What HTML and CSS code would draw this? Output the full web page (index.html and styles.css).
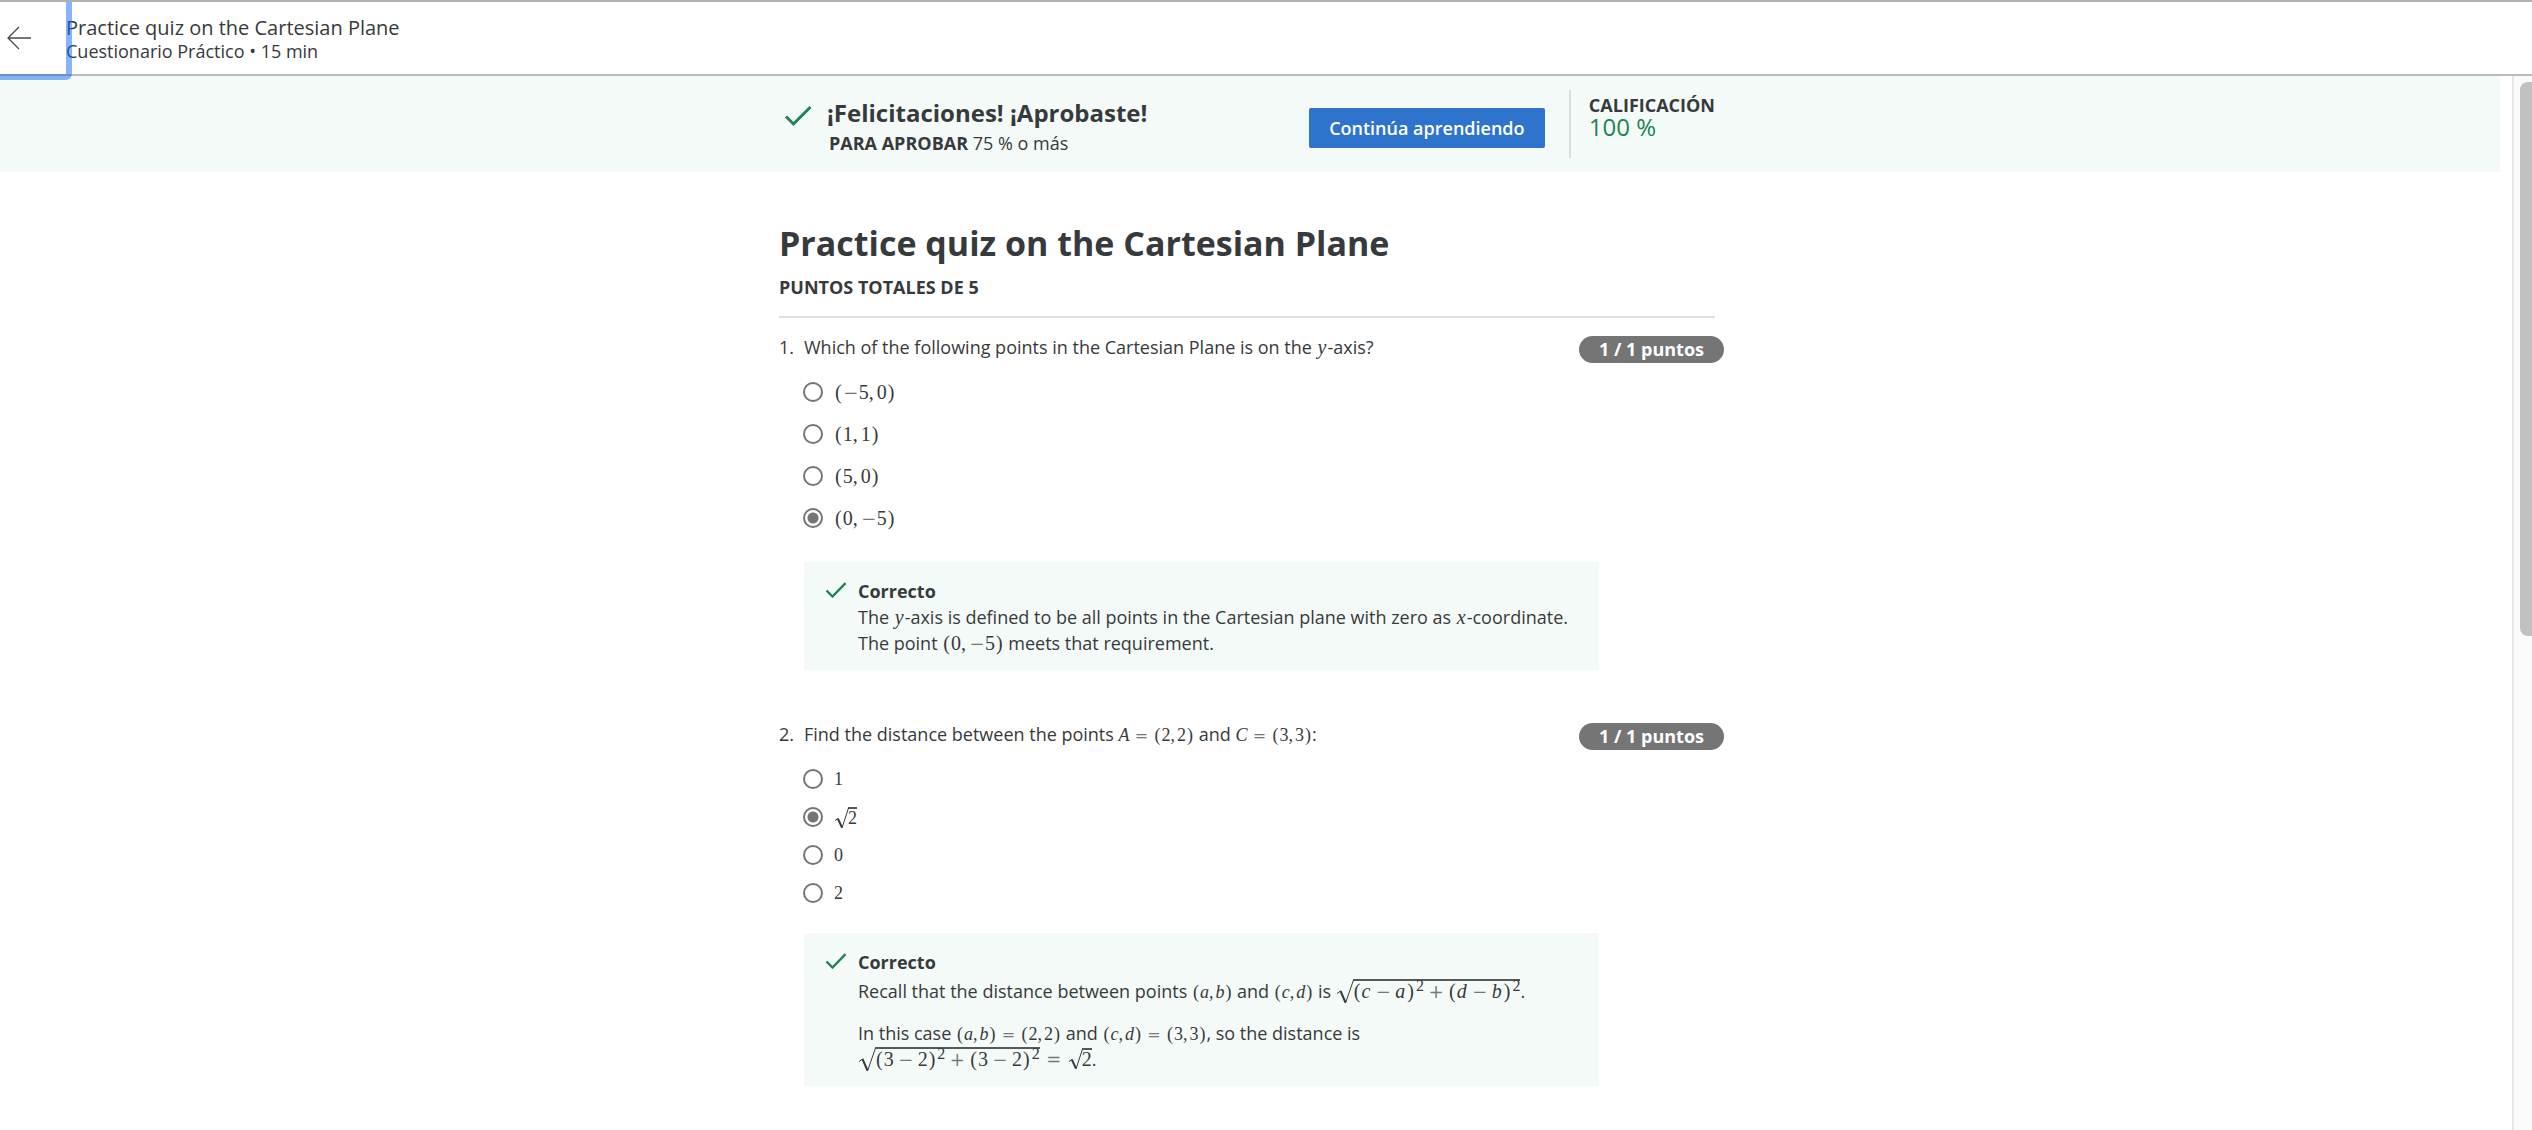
FILE: index.html
```html
<!DOCTYPE html>
<html lang="es">
<head>
<meta charset="utf-8">
<title>Practice quiz on the Cartesian Plane</title>
<link rel="stylesheet" href="styles.css">
</head>
<body>
<header class="topbar">
  <button class="back" type="button" aria-label="Volver">
    <svg width="24" height="24" viewBox="0 0 24 24" fill="none" stroke="#4a4a50" stroke-width="1.3"><path d="M12 1 1 12l11 11M1 12h23"/></svg>
  </button>
  <div class="topbar-text">
    <div class="topbar-title">Practice quiz on the Cartesian Plane</div>
    <div class="topbar-sub">Cuestionario Práctico • 15 min</div>
  </div>
</header>

<div class="shell">
  <div class="page">
    <section class="banner">
      <div class="column banner-row">
        <svg class="banner-check" width="28" height="22" viewBox="0 0 28 22" fill="none" stroke="#1f8354" stroke-width="3"><path d="M2 11.500 9.500 19 26.500 2"/></svg>
        <div class="banner-text">
          <h2 class="banner-title">¡Felicitaciones! ¡Aprobaste!</h2>
          <p class="banner-sub"><strong>PARA APROBAR</strong> 75 % o más</p>
        </div>
        <button class="continue" type="button">Continúa aprendiendo</button>
        <div class="grade">
          <div class="grade-label">CALIFICACIÓN</div>
          <div class="grade-value">100 %</div>
        </div>
      </div>
    </section>

    <main class="column quiz">
      <h1 class="quiz-title">Practice quiz on the Cartesian Plane</h1>
      <p class="quiz-total">PUNTOS TOTALES DE 5</p>

      <section class="question">
        <div class="prompt-row">
          <span class="number">1.</span>
          <p class="prompt" id="q1">Which of the following points in the Cartesian Plane is on the <span class="math"><i>y</i></span>-axis?</p>
          <span class="badge">1 / 1 puntos</span>
        </div>
        <div class="options" role="radiogroup" aria-labelledby="q1">
          <label class="option"><input type="radio" name="q1"><span class="math"><b>(</b><b class="op">−</b>5<b class="comma">,</b>0<b>)</b></span></label>
          <label class="option"><input type="radio" name="q1"><span class="math"><b>(</b>1<b class="comma">,</b>1<b>)</b></span></label>
          <label class="option"><input type="radio" name="q1"><span class="math"><b>(</b>5<b class="comma">,</b>0<b>)</b></span></label>
          <label class="option"><input type="radio" name="q1" checked><span class="math"><b>(</b>0<b class="comma">,</b><b class="op">−</b>5<b>)</b></span></label>
        </div>
        <div class="feedback">
          <svg class="feedback-check" width="22" height="16" viewBox="0 0 22 16" fill="none" stroke="#1f8354" stroke-width="2.400"><path d="M1.500 8.500 7.500 14.500 20.500 1.200"/></svg>
          <div>
            <p class="verdict">Correcto</p>
            <p>The <span class="math"><i>y</i></span>-axis is defined to be all points in the Cartesian plane with zero as <span class="math"><i>x</i></span>-coordinate.<br>The point <span class="math"><b>(</b>0<b class="comma">,</b><b class="op">−</b>5<b>)</b></span> meets that requirement.</p>
          </div>
        </div>
      </section>

      <section class="question">
        <div class="prompt-row">
          <span class="number">2.</span>
          <p class="prompt" id="q2">Find the distance between the points <span class="math small"><i>A</i><b class="op rel">=</b><b>(</b>2<b class="comma">,</b>2<b>)</b></span> and <span class="math small"><i>C</i><b class="op rel">=</b><b>(</b>3<b class="comma">,</b>3<b>)</b></span>:</p>
          <span class="badge">1 / 1 puntos</span>
        </div>
        <div class="options compact" role="radiogroup" aria-labelledby="q2">
          <label class="option"><input type="radio" name="q2"><span class="math small">1</span></label>
          <label class="option"><input type="radio" name="q2" checked><span class="math small"><span class="root short"><svg class="surd" viewBox="0 0 15 22" fill="none" stroke="#373a3c"><path d="M1 13.500 4 11.500" stroke-width="1"/><path d="M3.800 11.500 8 20.500" stroke-width="2"/><path d="M8 21 14.500 1" stroke-width="1"/></svg><span class="radicand">2</span></span></span></label>
          <label class="option"><input type="radio" name="q2"><span class="math small">0</span></label>
          <label class="option"><input type="radio" name="q2"><span class="math small">2</span></label>
        </div>
        <div class="feedback">
          <svg class="feedback-check" width="22" height="16" viewBox="0 0 22 16" fill="none" stroke="#1f8354" stroke-width="2.400"><path d="M1.500 8.500 7.500 14.500 20.500 1.200"/></svg>
          <div>
            <p class="verdict">Correcto</p>
            <p class="recall">Recall that the distance between points <span class="math small"><b>(</b><i>a</i><b class="comma">,</b><i>b</i><b>)</b></span> and <span class="math small"><b>(</b><i>c</i><b class="comma">,</b><i>d</i><b>)</b></span> is <span class="math"><span class="root"><svg class="surd" viewBox="0 0 18 25" fill="none" stroke="#373a3c"><path d="M1 14.500 4.500 12" stroke-width="1"/><path d="M4.500 12 9.500 23.500" stroke-width="2"/><path d="M9.500 24 17.500 1" stroke-width="1"/></svg><span class="radicand"><b>(</b><i>c</i><b class="op bin">−</b><i>a</i><b>)</b><sup>2</sup><b class="op bin">+</b><b>(</b><i>d</i><b class="op bin">−</b><i>b</i><b>)</b><sup>2</sup></span></span></span>.</p>
            <p>In this case <span class="math small"><b>(</b><i>a</i><b class="comma">,</b><i>b</i><b>)</b><b class="op rel">=</b><b>(</b>2<b class="comma">,</b>2<b>)</b></span> and <span class="math small"><b>(</b><i>c</i><b class="comma">,</b><i>d</i><b>)</b><b class="op rel">=</b><b>(</b>3<b class="comma">,</b>3<b>)</b></span>, so the distance is<br><span class="math"><span class="root"><svg class="surd" viewBox="0 0 18 25" fill="none" stroke="#373a3c"><path d="M1 14.500 4.500 12" stroke-width="1"/><path d="M4.500 12 9.500 23.500" stroke-width="2"/><path d="M9.500 24 17.500 1" stroke-width="1"/></svg><span class="radicand"><b>(</b>3<b class="op bin">−</b>2<b>)</b><sup>2</sup><b class="op bin">+</b><b>(</b>3<b class="op bin">−</b>2<b>)</b><sup>2</sup></span></span><b class="op rel">=</b><span class="root short"><svg class="surd" viewBox="0 0 15 22" fill="none" stroke="#373a3c"><path d="M1 13.500 4 11.500" stroke-width="1"/><path d="M3.800 11.500 8 20.500" stroke-width="2"/><path d="M8 21 14.500 1" stroke-width="1"/></svg><span class="radicand">2</span></span></span>.</p>
          </div>
        </div>
      </section>
    </main>
  </div>
  <div class="scroll-track"><div class="scroll-thumb"></div></div>
</div>
</body>
</html>
```
FILE: styles.css
```css
* { box-sizing: border-box; }

body {
  margin: 0;
  min-height: 100vh;
  display: flex;
  flex-direction: column;
  background: #fff;
  color: #373a3c;
  font-family: "Open Sans", sans-serif;
  font-size: 18px;
  line-height: 26px;
}

p, h1, h2 { margin: 0; }

/* Top bar */
.topbar {
  display: flex;
  height: 76px;
  border-top: 2px solid #b0b0b0;
  border-bottom: 2px solid #bbb;
}

.back {
  position: relative;
  width: 66px;
  padding: 0 0 0 7px;
  border: 0;
  background: none;
  text-align: left;
}

/* Focus ring, drawn over the neighbouring title and divider */
.back::after {
  content: "";
  position: absolute;
  z-index: 1;
  inset: 0 -6px -6px 0;
  border: solid rgba(17, 106, 239, 0.5);
  border-width: 0 6px 6px 0;
  border-radius: 0 0 6px 0;
}

.back svg { display: block; }

.topbar-text { padding-top: 13px; }
.topbar-title { font-size: 20px; line-height: 26px; }
.topbar-sub { font-size: 18px; line-height: 20px; }

/* Scrolling area */
.shell { flex: 1; display: flex; }
.page { flex: 1; padding-right: 12px; }

.scroll-track {
  width: 20px;
  padding: 6px 0 0 6px;
  border-left: 2px solid #e7e7e7;
  background: #fafafa;
}

.scroll-thumb {
  height: 554px;
  border-radius: 8px 0 0 8px;
  background: #c1c1c1;
}

.column {
  width: 100%;
  max-width: 942px;
  margin: 0 auto;
  padding-right: 6px;
}

/* Result banner */
.banner { height: 96px; background: #f4faf8; }

.banner-row { display: flex; align-items: flex-start; padding-top: 14px; }
.banner-check { margin: 15px 15px 0 5px; }
.banner-text { flex: 1; padding-top: 7px; }
.banner-title { font-size: 24px; line-height: 32px; }
.banner-sub { padding-left: 2px; line-height: 28px; }

.continue {
  width: 236px;
  height: 40px;
  margin: 18px 24px 0 0;
  padding: 0;
  border: 0;
  border-radius: 2px;
  background: #2f74cc;
  color: #fff;
  font: 600 18px/24px "Open Sans", sans-serif;
}

.grade {
  height: 68px;
  padding: 3px 0 0 18px;
  border-left: 2px solid #ddd;
}

.grade-label { font-weight: 700; line-height: 24px; }
.grade-value { color: #1f8354; font-size: 24px; line-height: 20px; }

/* Quiz */
.quiz-title { padding-top: 48px; font-size: 34px; line-height: 46px; }

.quiz-total {
  padding: 9px 0 17px;
  border-bottom: 2px solid #e0e0e0;
  font-weight: 700;
  line-height: 24px;
}

.question { padding-top: 16px; }
.question + .question { padding-top: 51px; }
.prompt-row { display: flex; align-items: flex-start; }
.number { width: 25px; }
.prompt { flex: 1; }

.badge {
  width: 145px;
  height: 27px;
  margin: 2px -9px 0 0;
  border-radius: 14px;
  background: #757575;
  color: #fff;
  font-weight: 700;
  line-height: 27px;
  text-align: center;
}

.options { padding: 8px 0 23px 24px; }
.option { display: flex; align-items: center; width: max-content; height: 42px; }
.options.compact { padding-top: 10px; padding-bottom: 21px; }
.compact .option { height: 38px; }

.option input {
  appearance: none;
  width: 20px;
  height: 20px;
  margin: 0 11px 0 0;
  border: 2px solid #757575;
  border-radius: 50%;
}

.option input:checked { background: radial-gradient(circle, #757575 5px, transparent 6px); }

.feedback {
  display: flex;
  width: 795px;
  max-width: 100%;
  margin-left: 25px;
  padding: 16px 20px 14px 21px;
  background: #f4faf8;
}

.feedback-check { flex: none; margin: 4px 11px 0 0; }
.verdict { font-weight: 700; }
.recall { padding: 3px 0 16px; }

/* Formulas */
.math { font-family: "Liberation Serif", serif; font-size: 20px; line-height: 20px; white-space: nowrap; }
.math.small { font-size: 18px; }
.math b { padding: 0 1px; font-weight: 400; }
.math i { padding: 0 1px; }
.radicand i { padding-left: 0; }
.math.small i { padding: 0; }
.math .comma { padding: 0 3px 0 0; }
.math.small .comma { padding-right: 2px; }

.math .op {
  display: inline-block;
  width: 16px;
  padding: 0;
  color: #777;
  font-family: "DejaVu Serif", serif;
  font-size: 18px;
  text-align: center;
}

.math .bin { margin: 0 4px; }
.math .rel { margin: 0 6px; }
.math.small .op { width: 14px; margin: 0 5px; font-size: 16px; }

.root { display: inline-block; position: relative; padding-left: 17px; }
.root.short { padding-left: 14px; line-height: 18px; }
.surd { position: absolute; left: 0; top: 0; width: 18px; height: 25px; }
.short .surd { width: 15px; height: 22px; }
.radicand { display: inline-block; border-top: 2px solid #55585a; }
.math .radicand i { padding: 0 1px 0 0; }
.math sup { padding-left: 1px; font-size: 16px; line-height: 0; vertical-align: 7px; }
```
